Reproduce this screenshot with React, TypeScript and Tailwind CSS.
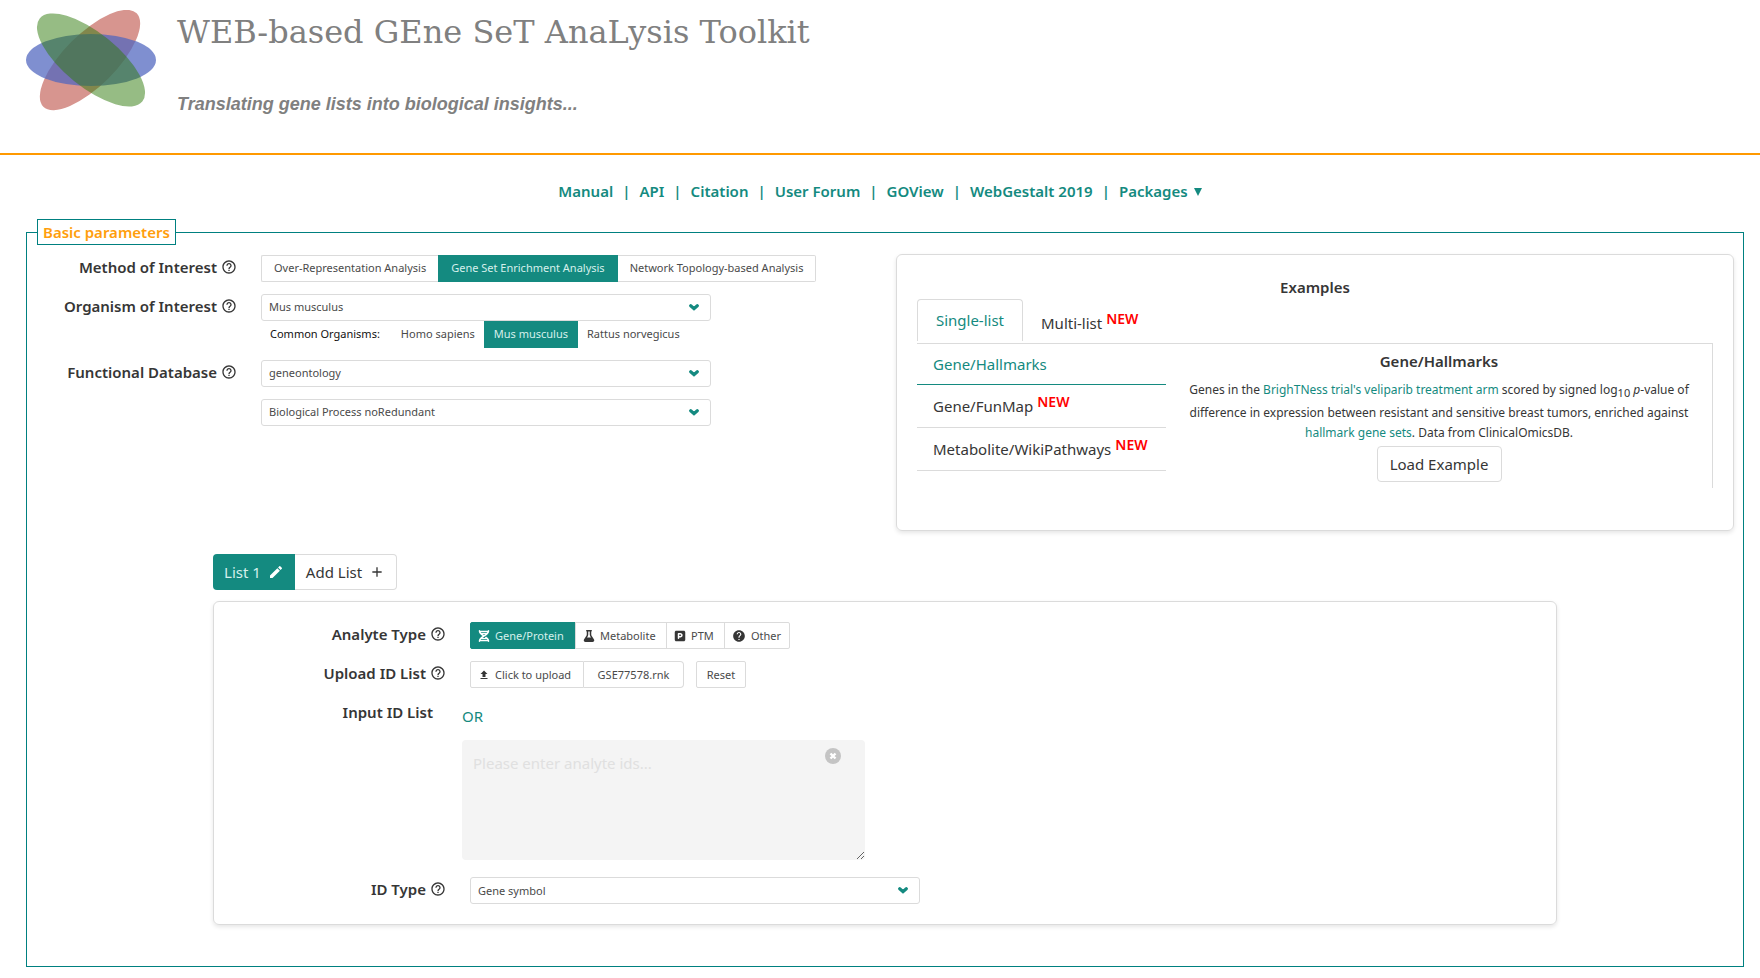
import { useState } from "react";
import type { ReactNode } from "react";
import { FaDna, FaFlask, FaSquareParking } from "react-icons/fa6";
import { MdAdd, MdEdit, MdHelp, MdHelpOutline, MdUpload } from "react-icons/md";

const NAV = ["Manual", "API", "Citation", "User Forum", "GOView", "WebGestalt 2019"];
const METHODS = ["Over-Representation Analysis", "Gene Set Enrichment Analysis", "Network Topology-based Analysis"];
const ORGANISMS = ["Homo sapiens", "Mus musculus", "Rattus norvegicus"];
const EXAMPLES = [
  { name: "Gene/Hallmarks", fresh: false },
  { name: "Gene/FunMap", fresh: true },
  { name: "Metabolite/WikiPathways", fresh: true },
];
const ANALYTES = [
  { name: "Gene/Protein", icon: <FaDna className="size-3" />, box: "w-[106px]" },
  { name: "Metabolite", icon: <FaFlask className="size-3" />, box: "w-[92px] -ml-px" },
  { name: "PTM", icon: <FaSquareParking className="size-3" />, box: "w-[59px] -ml-px" },
  { name: "Other", icon: <MdHelp className="size-[14px]" />, box: "w-[66px] -ml-px" },
];

function Logo() {
  return (
    <svg viewBox="0 0 130 102" className="h-[102px] w-[130px]" role="img" aria-label="WebGestalt logo">
      <ellipse cx="64" cy="50" rx="66" ry="26" transform="rotate(-45 64 50)" fill="#b02c20" fillOpacity="0.5" />
      <ellipse cx="65" cy="50" rx="65" ry="26" fill="#4f66bf" fillOpacity="0.73" />
      <ellipse cx="65" cy="50" rx="66" ry="27" transform="rotate(39 65 50)" fill="#2d7909" fillOpacity="0.5" />
    </svg>
  );
}

function New() {
  return <sup className="-top-[5px] ml-1 text-sm font-semibold text-[#ff0000]">NEW</sup>;
}

function Label({ htmlFor, children }: { htmlFor?: string; children: ReactNode }) {
  return (
    <div className="flex items-center justify-end gap-1 self-start pr-px text-[15px] leading-6 font-semibold text-[#363636]">
      <label htmlFor={htmlFor}>{children}</label>
      <button type="button" aria-label="Help">
        <MdHelpOutline className="size-4" />
      </button>
    </div>
  );
}

function Select({ id, label, value }: { id: string; label?: string; value: string }) {
  return (
    <div className="relative w-full max-w-[450px]">
      <select
        id={id}
        aria-label={label}
        className="block h-[27px] w-full appearance-none rounded-[3px] border border-[#dbdbdb] bg-white pr-8 pl-[7px] text-[11px] text-[#4a4a4a]"
      >
        <option>{value}</option>
      </select>
      <svg viewBox="0 0 10 7" className="pointer-events-none absolute top-[10px] right-3 h-[7px] w-[10px]" aria-hidden="true">
        <path d="M1.7 1.8 5 4.7 8.3 1.8" fill="none" stroke="#148a80" strokeWidth="3.2" strokeLinecap="round" />
      </svg>
    </div>
  );
}

function Header() {
  return (
    <header className="flex h-[155px] gap-[21px] border-b-2 border-[#ff9900] pt-[10px] pl-[26px] text-[#808080]">
      <Logo />
      <div>
        <h1 className="font-['DejaVu_Serif',serif] text-[32px] leading-[44px]">WEB-based GEne SeT AnaLysis Toolkit</h1>
        <p className="mt-10 font-['Liberation_Sans',sans-serif] text-lg leading-5 font-bold italic">
          Translating gene lists into biological insights...
        </p>
      </div>
    </header>
  );
}

function Nav() {
  return (
    <nav className="flex items-center justify-center gap-[9px] pt-6 pb-4 text-[15px] leading-6 font-semibold text-[#148a80]">
      {NAV.map((item) => (
        <span key={item} className="flex gap-[9px]">
          <a href="#">{item}</a>
          <span>|</span>
        </span>
      ))}
      <button type="button" className="flex items-center gap-[6px]">
        Packages
        <svg viewBox="0 0 8 10" className="h-[10px] w-2" aria-hidden="true">
          <path d="M0 2h8L4 10z" fill="currentColor" />
        </svg>
      </button>
    </nav>
  );
}

function Parameters() {
  const [method, setMethod] = useState(1);
  return (
    <div className="grid grid-cols-[211px_1fr] content-start gap-x-[23px] gap-y-3 pt-px">
      <Label>Method of Interest</Label>
      <div className="flex h-[27px] text-[11px] whitespace-nowrap text-[#4a4a4a]">
        {METHODS.map((name, i) => (
          <button
            key={name}
            type="button"
            aria-pressed={i === method}
            onClick={() => setMethod(i)}
            className={
              i === method
                ? "border border-[#148a80] bg-[#148a80] px-3 text-[#d6f0ec]"
                : "border border-[#dbdbdb] px-3 first:rounded-l-xs first:border-r-0 last:rounded-r-xs last:border-l-0"
            }
          >
            {name}
          </button>
        ))}
      </div>
      <Label htmlFor="organism">Organism of Interest</Label>
      <div>
        <Select id="organism" value="Mus musculus" />
        <div className="flex h-[27px] items-center pl-[9px] text-[11px] text-[#4a4a4a]">
          <span className="mr-3 text-[#111]">Common Organisms:</span>
          {ORGANISMS.map((name) => (
            <button
              key={name}
              type="button"
              className={name === "Mus musculus" ? "h-full bg-[#148a80] px-[10px] text-[#d6f0ec]" : "h-full px-[9px]"}
            >
              {name}
            </button>
          ))}
        </div>
      </div>
      <Label htmlFor="database">Functional Database</Label>
      <div className="flex flex-col gap-3">
        <Select id="database" value="geneontology" />
        <Select id="subset" label="Database subset" value="Biological Process noRedundant" />
      </div>
    </div>
  );
}

function Examples() {
  return (
    <section className="rounded-md border border-[#dbdbdb] px-5 pt-5 pb-[42px] text-[#363636] shadow-[0_2px_4px_rgba(10,10,10,0.1)]">
      <h2 className="text-center text-[15px] leading-6 font-semibold">Examples</h2>
      <div className="flex border-b border-[#dbdbdb] text-[15px]">
        <button type="button" className="mb-[2px] h-[42px] w-[106px] rounded-t-sm border border-b-0 border-[#dbdbdb] text-[#148a80]">
          Single-list
        </button>
        <button type="button" className="px-[18px] pt-1">
          Multi-list
          <New />
        </button>
      </div>
      <div className="flex">
        <ul className="w-[249px] text-[15px]">
          {EXAMPLES.map(({ name, fresh }) => (
            <li key={name}>
              <button
                type="button"
                className={
                  fresh
                    ? "h-[43px] w-full border-b border-[#dbdbdb] pl-4 text-left"
                    : "h-[41px] w-full border-b border-[#148a80] pl-4 text-left text-[#148a80]"
                }
              >
                {name}
                {fresh && <New />}
              </button>
            </li>
          ))}
        </ul>
        <div className="flex flex-1 flex-col items-center border-r border-[#dbdbdb] px-1 pt-[5px] pb-[6px]">
          <h3 className="text-[15px] leading-6 font-semibold">Gene/Hallmarks</h3>
          <p className="mt-[7px] text-center text-xs leading-5">
            Genes in the{" "}
            <a href="#" className="text-[#148a80]">
              BrighTNess trial's veliparib treatment arm
            </a>{" "}
            scored by signed log
            <sub className="static align-sub text-[11px] leading-5">10</sub> <i>p</i>-value of difference in expression between
            resistant and sensitive breast tumors, enriched against{" "}
            <a href="#" className="text-[#148a80]">
              hallmark gene sets
            </a>
            . Data from ClinicalOmicsDB.
          </p>
          <button type="button" className="mt-[3px] h-9 w-[125px] rounded-sm border border-[#dbdbdb] text-[15px]">
            Load Example
          </button>
        </div>
      </div>
    </section>
  );
}

function ListCard() {
  return (
    <section className="mt-[11px] grid grid-cols-[213px_1fr] gap-x-[23px] gap-y-3 rounded-md border border-[#dbdbdb] p-5 text-[11px] text-[#4a4a4a] shadow-[0_2px_4px_rgba(10,10,10,0.1)]">
      <Label>Analyte Type</Label>
      <div className="flex h-[27px]">
        {ANALYTES.map(({ name, icon, box }, i) => (
          <button
            key={name}
            type="button"
            className={`flex items-center gap-[5px] border pl-[7px] first:rounded-l-xs last:rounded-r-xs ${box} ${
              i === 0 ? "border-[#148a80] bg-[#148a80] text-[#d6f0ec]" : "border-[#dbdbdb]"
            }`}
          >
            <span className={i === 0 ? "text-white" : "text-[#363636]"}>{icon}</span>
            {name}
          </button>
        ))}
      </div>
      <Label htmlFor="upload">Upload ID List</Label>
      <div className="flex h-[27px]">
        <label
          htmlFor="upload"
          className="flex w-[114px] cursor-pointer items-center gap-[5px] rounded-l-xs border border-[#dbdbdb] pl-[7px] has-focus-visible:border-[#148a80]"
        >
          <input id="upload" type="file" className="sr-only" />
          <MdUpload className="size-3 text-[#363636]" />
          Click to upload
        </label>
        <span className="flex w-[100px] items-center justify-center rounded-r-sm border border-l-0 border-[#dbdbdb]">GSE77578.rnk</span>
        <button type="button" className="ml-3 w-[50px] rounded-xs border border-[#dbdbdb]">
          Reset
        </button>
      </div>
      <label htmlFor="ids" className="pr-[14px] text-right text-[15px] leading-6 font-semibold text-[#363636]">
        Input ID List
      </label>
      <div className="-ml-2 pt-1 pb-[5px]">
        <p className="mb-3 text-[15px] leading-6 text-[#148a80]">OR</p>
        <div className="relative max-w-[403px]">
          <textarea
            id="ids"
            disabled
            placeholder="Please enter analyte ids..."
            className="block h-[120px] w-full resize rounded-sm bg-[#f4f4f4] px-[11px] py-[11px] text-[15px] leading-6 placeholder:text-[#e0e0e0]"
          />
          <button type="button" aria-label="Clear" className="absolute top-2 right-6">
            <svg viewBox="0 0 16 16" className="size-4" aria-hidden="true">
              <circle cx="8" cy="8" r="8" fill="#c4c4c4" />
              <path d="M5.5 5.5l5 5M10.5 5.5l-5 5" stroke="#fff" strokeWidth="2.4" />
            </svg>
          </button>
        </div>
      </div>
      <Label htmlFor="idtype">ID Type</Label>
      <Select id="idtype" value="Gene symbol" />
    </section>
  );
}

export default function App() {
  return (
    <div className="bg-white font-['Noto_Sans',sans-serif]">
      <Header />
      <Nav />
      <fieldset className="mr-4 ml-[26px] border border-[#008080] pb-[41px]">
        <legend className="ml-[10px] border border-[#008080] px-[5px] text-[15px] leading-6 font-semibold text-[#ff9e0d]">
          Basic parameters
        </legend>
        <div className="grid grid-cols-[869fr_838fr] pt-[9px] pr-[9px]">
          <Parameters />
          <Examples />
        </div>
        <div className="mx-[186px] mt-[23px]">
          <div className="flex h-9 text-[15px] text-[#363636]">
            <button type="button" className="flex w-[82px] items-center justify-center gap-[7px] rounded-l-sm bg-[#148a80] text-[#d6f0ec]">
              List 1<MdEdit className="size-4 text-white" />
            </button>
            <button type="button" className="flex w-[102px] items-center justify-center gap-[7px] rounded-r-sm border border-l-0 border-[#dbdbdb]">
              Add List
              <MdAdd className="size-4" />
            </button>
          </div>
          <ListCard />
        </div>
      </fieldset>
    </div>
  );
}
